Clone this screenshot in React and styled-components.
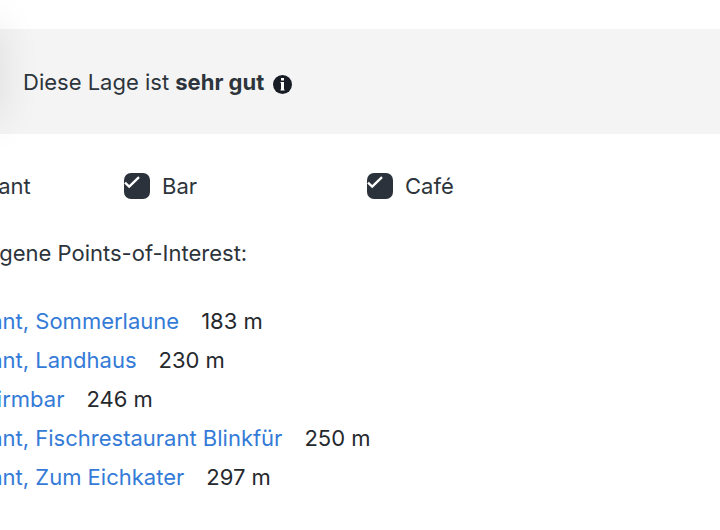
import React from "react";
import styled, { createGlobalStyle } from "styled-components";

const GlobalStyle = createGlobalStyle`
  *, *::before, *::after { box-sizing: border-box; }
  body {
    margin: 0;
    background: #fff;
    color: #2d343b;
    font-family: Inter, "Liberation Sans", sans-serif;
    font-size: 22px;
    line-height: 39px;
    overflow-x: hidden;
  }
`;

const Page = styled.main`
  position: relative;
  overflow: hidden;
  padding: 29px 0 32px;
`;

const PanelShadow = styled.div`
  position: absolute;
  top: 24px;
  left: -30px;
  width: 30px;
  height: 96px;
  box-shadow: 0 0 40px rgba(0, 0, 0, 0.11);
  pointer-events: none;
`;

const Banner = styled.section`
  display: flex;
  align-items: center;
  gap: 9px;
  padding: 34px 23px 32px;
  background: #f4f4f4;
`;

const BannerText = styled.p`
  margin: 0;
`;

const InfoButton = styled.button`
  display: flex;
  margin: 4px 0 0;
  padding: 0;
  border: 0;
  background: none;
`;

const Content = styled.div`
  margin-left: -119px;
`;

const Filters = styled.div`
  display: grid;
  grid-template-columns: repeat(3, 243px);
  margin-top: 33px;
`;

const Filter = styled.label`
  display: flex;
  align-items: center;
  gap: 12px;
`;

const Checkbox = styled.input`
  appearance: none;
  flex: none;
  width: 26px;
  height: 26px;
  margin: 0 0 2px;
  border-radius: 7px;
  background: #2b323b no-repeat 0 2px / 16px 14px;

  &:checked {
    background-image: url("data:image/svg+xml,%3Csvg xmlns='http://www.w3.org/2000/svg' viewBox='0 0 16 14'%3E%3Cpath d='M1 7.7 5.2 11.7 15 2.2' fill='none' stroke='white' stroke-width='2.3'/%3E%3C/svg%3E");
  }
`;

const Heading = styled.p`
  margin: 28px 0 29px;
  padding-left: 19px;
`;

const PlaceList = styled.ul`
  margin: 0;
  padding: 0 0 0 30px;
  list-style: none;
`;

const Place = styled.li`
  display: flex;
  gap: 22px;
  white-space: nowrap;
`;

const PlaceLink = styled.a`
  color: #347bd8;
  text-decoration: none;
`;

const Distance = styled.span`
  color: #25292e;
`;

const filters = ["Restaurant", "Bar", "Café"];

const places = [
  { name: "Restaurant, Sommerlaune", distance: "183 m" },
  { name: "Restaurant, Landhaus", distance: "230 m" },
  { name: "Bar, Schirmbar", distance: "246 m" },
  { name: "Restaurant, Fischrestaurant Blinkfür", distance: "250 m" },
  { name: "Restaurant, Zum Eichkater", distance: "297 m" },
];

function InfoIcon() {
  return (
    <svg width="19" height="19" viewBox="0 0 19 19" aria-hidden="true">
      <circle cx="9.5" cy="9.5" r="9.5" fill="#171c25" />
      <path d="M8 3h3v2.500H8zM7.500 7H11v7.500h.500v1h-4v-1H8V8h-.500z" fill="#fff" />
    </svg>
  );
}

export default function App() {
  return (
    <>
      <GlobalStyle />
      <Page>
        <Banner>
          <BannerText>
            Diese Lage ist <strong>sehr gut</strong>
          </BannerText>
          <InfoButton type="button" aria-label="Information">
            <InfoIcon />
          </InfoButton>
        </Banner>
        <Content>
          <Filters>
            {filters.map((name) => (
              <Filter key={name}>
                <Checkbox type="checkbox" defaultChecked />
                {name}
              </Filter>
            ))}
          </Filters>
          <Heading>Nahegelegene Points-of-Interest:</Heading>
          <PlaceList>
            {places.map((place) => (
              <Place key={place.name}>
                <PlaceLink href="#">{place.name}</PlaceLink>
                <Distance>{place.distance}</Distance>
              </Place>
            ))}
          </PlaceList>
        </Content>
        <PanelShadow />
      </Page>
    </>
  );
}
